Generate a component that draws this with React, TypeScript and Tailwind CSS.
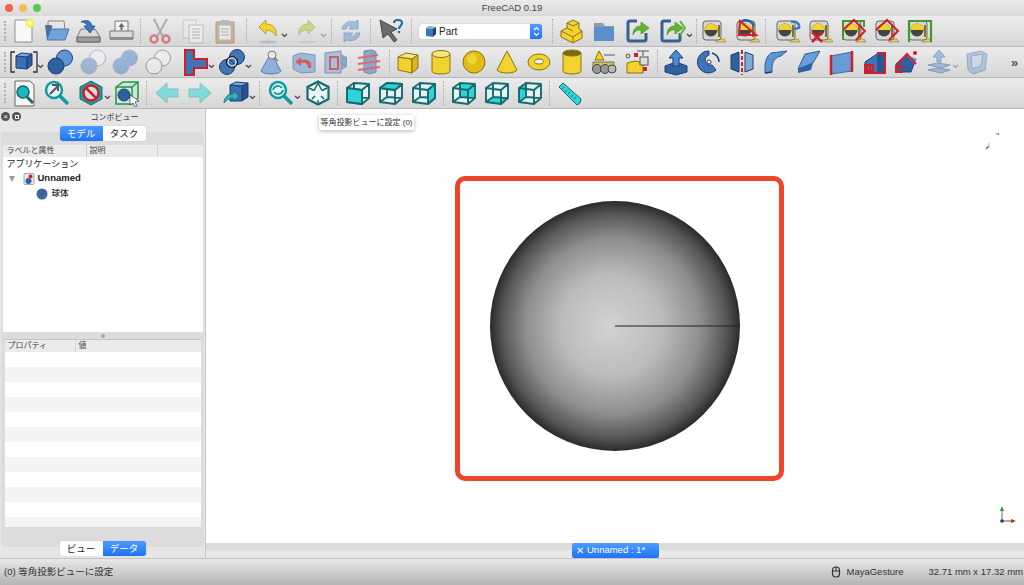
import type { ReactNode } from "react";

const BLUE = "#3f74b5";
const NAVY = "#1d3f72";
const GOLD = "#f2d22e";
const GOLD_D = "#8a7210";
const TEAL = "#2fd4d8";
const TEAL_D = "#166a70";
const RED = "#cf1f2b";

function Sv({ children, faded }: { children: ReactNode; faded?: boolean }) {
  return (
    <svg width="28" height="28" viewBox="0 0 28 28" className={faded ? "opacity-50" : ""}>
      {children}
    </svg>
  );
}

function Tool({ children, className = "w-[33px]" }: { children: ReactNode; className?: string }) {
  return <div className={`flex shrink-0 items-center justify-center ${className}`}>{children}</div>;
}

function Chev({ className = "" }: { className?: string }) {
  return (
    <div className={`-ml-[4px] flex w-[8px] shrink-0 justify-center pt-[8px] ${className}`}>
      <svg width="7" height="5" viewBox="0 0 7 5">
        <path d="M1 1l2.5 2.5L6 1" fill="none" stroke="#444" strokeWidth="1.2" />
      </svg>
    </div>
  );
}

function Sep({ className = "" }: { className?: string }) {
  return <div className={`h-[24px] w-px shrink-0 border-l border-dotted border-[#a8a8a8] ${className}`} />;
}

function Handle() {
  return <div className="ml-[4px] h-[20px] w-[3px] shrink-0 border-l-2 border-dotted border-[#b0b0b0]" />;
}

function Row({ children }: { children: ReactNode }) {
  return (
    <div className="flex h-[31px] items-center overflow-hidden border-b border-[#b8b8b8] bg-gradient-to-b from-[#ececec] to-[#d6d6d6]">
      {children}
    </div>
  );
}

/* ---- row 1 icons ---- */
const NewDoc = () => (
  <Sv>
    <path d="M6 3h17v22H6z" fill="#f8f8f4" stroke="#8f8f8f" />
    <circle cx="21" cy="6" r="4.5" fill="#f6ee5a" />
    <circle cx="21" cy="6" r="2" fill="#fff9b0" />
  </Sv>
);
const OpenFolder = () => (
  <Sv>
    <path d="M6 4h16l1 9H6z" fill="#e6e6e6" stroke="#888" />
    <path d="M3 8h6l2 2h-1L7 22h14l1 1H5z" fill="#4c6f9e" />
    <path d="M9 12h18l-4 11H5z" fill="#6fa3dc" stroke="#4c78ae" />
  </Sv>
);
const SaveDisk = () => (
  <Sv>
    <path d="M7 12h14l5 8v5H3v-5z" fill="#d9d9d9" stroke="#777" />
    <path d="M3 20h23v5H3z" fill="#9c9c9c" stroke="#666" />
    <path d="M7 5c6-3 10-1 11 4h3l-5 7-6-7h3c0-2-3-4-6-4z" fill="#3b78c4" stroke="#1d4d8a" strokeWidth=".8" />
  </Sv>
);
const ExportTray = () => (
  <Sv>
    <path d="M8 4h13v11H8z" fill="#f2f2f2" stroke="#777" />
    <path d="M14.500 6l3 4h-2v3h-2v-3h-2z" fill="#666" />
    <path d="M3 14h23v8H3z" fill="#dcdcdc" stroke="#777" />
    <path d="M3 20h23v3H3z" fill="#8e8e8e" />
  </Sv>
);
const Scissors = () => (
  <Sv faded>
    <path d="M8 2l9 18M21 2l-10 18" stroke="#777" strokeWidth="2" fill="none" />
    <circle cx="8" cy="22" r="3.500" fill="none" stroke={RED} strokeWidth="2.500" />
    <circle cx="20" cy="22" r="3.500" fill="none" stroke={RED} strokeWidth="2.500" />
  </Sv>
);
const CopyPages = () => (
  <Sv faded>
    <path d="M4 3h13v18H4z" fill="#eee" stroke="#aaa" />
    <path d="M10 8h14v18H10z" fill="#f7f7f7" stroke="#999" />
    <path d="M13 12h8M13 15h8M13 18h8M13 21h8" stroke="#888" />
  </Sv>
);
const Paste = () => (
  <Sv faded>
    <path d="M5 5h18v21H5z" fill="#b9873f" stroke="#7a5520" />
    <path d="M8 8h12v15H8z" fill="#f3f3f3" stroke="#888" />
    <path d="M10 3h8v5h-8z" fill="#888" />
    <path d="M10 12h8M10 15h8M10 18h8" stroke="#777" />
  </Sv>
);
const Arrow = ({ mirror, fill, stroke, faded }: { mirror?: boolean; fill: string; stroke: string; faded?: boolean }) => (
  <Sv faded={faded}>
    <ellipse cx="14" cy="25" rx="9" ry="1.500" fill="#bbb" />
    <path
      d={mirror ? "M22 10l-7-7v4C9 7 5 11 6 18c2-4 5-5 9-5v4z" : "M5 10l7-7v4c6 0 11 4 10 12-2-4-6-6-10-6v4z"}
      fill={fill}
      stroke={stroke}
      strokeWidth=".8"
    />
  </Sv>
);
const Refresh = () => (
  <Sv faded>
    <path d="M5 12C6 6 12 3 18 5l3-2v9h-9l3-3c-3-1-5 0-6 3zM23 16c-1 6-7 9-13 7l-3 2v-9h9l-3 3c3 1 5 0 6-3z" fill="#5c97d6" stroke="#2c5f9e" strokeWidth=".8" />
  </Sv>
);
const WhatsThis = () => (
  <Sv>
    <path d="M3 3l17 9-6 3 6 8-3 2-6-8-5 4z" fill="#6c6c6c" stroke="#333" strokeWidth=".8" />
    <path d="M17 6c0-4 8-4 8 0 0 3-3 3-3 6" fill="none" stroke="#2a6bb0" strokeWidth="2.200" />
    <circle cx="22" cy="15" r="1.300" fill="#2a6bb0" />
  </Sv>
);
const Steps = () => (
  <Sv>
    <path d="M5 14l6-3V6l6-3 6 3v6l3 2v7l-9 5-12-6z" fill={GOLD} stroke={GOLD_D} />
    <path d="M5 14l12 6 9-6M17 20v6M11 6l6 3 6-3M11 11l6 3" fill="none" stroke={GOLD_D} />
  </Sv>
);
const PlainFolder = () => (
  <Sv>
    <path d="M4 6h9l2 3h9v15H4z" fill="#8f9aa8" />
    <path d="M4 10h20v14H4z" fill="#5c8fc9" />
  </Sv>
);
const LinkArrow = ({ extra }: { extra?: boolean }) => (
  <Sv>
    <path d="M13 4H6a2 2 0 00-2 2v16a2 2 0 002 2h14a2 2 0 002-2v-6" fill="none" stroke="#33628f" strokeWidth="3" />
    <path d="M9 18c0-6 3-9 8-9V5l8 6-8 6v-4c-4 0-6 1-8 5z" fill="#5fb52e" stroke="#3d8a18" strokeWidth=".6" />
    {extra && <path d="M22 4l5 7-5 7" fill="none" stroke="#5fb52e" strokeWidth="2" />}
  </Sv>
);
const Tape = ({ children }: { children?: ReactNode }) => (
  <Sv>
    <path d="M15 22h9l2 3h-10z" fill={GOLD} stroke="#777" strokeWidth=".6" />
    <rect x="3" y="4" width="18" height="19" rx="3" fill="#d8d8d8" stroke="#666" />
    <circle cx="11" cy="13" r="6.500" fill="#444" />
    <path d="M4.500 13a6.500 6.500 0 0113 0z" fill={GOLD} />
    <path d="M19 8v12" stroke={GOLD_D} strokeWidth="2" />
    {children}
  </Sv>
);

/* ---- row 2 icons ---- */
const Cube = ({ front, top, side, edge, faded }: { front: string; top: string; side: string; edge: string; faded?: boolean }) => (
  <Sv faded={faded}>
    <path d="M4 9l14 2v14L4 22z" fill={front} stroke={edge} />
    <path d="M4 9l8-4 12 2-6 4z" fill={top} stroke={edge} />
    <path d="M18 11l6-4v13l-6 5z" fill={side} stroke={edge} />
  </Sv>
);
const BracketCube = () => (
  <svg width="28" height="28" viewBox="0 0 28 28">
    <path d="M5 4H1v20h4M23 4h4v20h-4" fill="none" stroke="#333" strokeWidth="1.300" />
    <path d="M6 8l11 1v12L6 20z" fill="#3a6fb3" stroke={NAVY} />
    <path d="M6 8l5-3 11 1-5 3z" fill="#7aa7dc" stroke={NAVY} />
    <path d="M17 9l5-3v11l-5 4z" fill="#2d5a96" stroke={NAVY} />
  </svg>
);
const Bool = ({ a, b, stroke, faded }: { a: string; b: string; stroke: string; faded?: boolean }) => (
  <Sv faded={faded}>
    <circle cx="18.500" cy="10" r="8" fill={b} stroke={stroke} />
    <circle cx="10" cy="18" r="8" fill={a} stroke={stroke} />
  </Sv>
);
const SectionT = () => (
  <Sv>
    <path d="M4 2h9v9h13v9H13v7H4z" fill={BLUE} stroke={RED} strokeWidth="2" />
    <path d="M13 11h13" stroke={RED} strokeWidth="2" />
  </Sv>
);
const Join = () => (
  <Sv>
    <circle cx="19" cy="9" r="7.500" fill={BLUE} stroke={NAVY} />
    <circle cx="9" cy="19" r="7.500" fill={BLUE} stroke={NAVY} />
    <circle cx="14" cy="14" r="5.500" fill="none" stroke="#111" strokeWidth="1.200" />
    <circle cx="14" cy="14" r="4" fill="none" stroke="#eee" strokeWidth="1.200" />
  </Sv>
);
const ConeCheck = () => (
  <Sv>
    <path d="M14 5L4 23c3 4 17 4 20 0z" fill="#8fb0d8" stroke="#5c7ea8" />
    <circle cx="15" cy="7" r="4" fill="#e8e8e8" stroke="#777" />
    <path d="M18 10l3 3" stroke="#777" strokeWidth="1.500" />
  </Sv>
);
const BlockRed = () => (
  <Sv>
    <path d="M3 8l8-3 14 2v17l-14 1-8-4z" fill="#9db9da" stroke="#7d95b4" />
    <path d="M21 20c2-7-4-10-10-8V9l-6 5 6 4v-3c4-1 7 1 7 5z" fill="#d0605c" />
  </Sv>
);
const CrossSec = () => (
  <Sv>
    <path d="M3 5l16-2v22L3 25z" fill="#a9bedb" stroke="#7d95b4" />
    <path d="M19 6l6 3v10l-6 3z" fill="#8aa4c8" />
    <path d="M8 9h8v12H8z" fill="none" stroke="#d0605c" strokeWidth="2" />
  </Sv>
);
const Slices = () => (
  <Sv>
    <path d="M9 3l8-1 4 2v20l-6 2-6-2z" fill="#8aa8cf" stroke="#6d8bb2" />
    <path d="M3 10l20-3M3 16l22-3M3 22l22-3" stroke="#dc6a66" strokeWidth="1.800" />
  </Sv>
);
const YBox = () => <Cube front={GOLD} top="#f8e67a" side="#d9b81f" edge={GOLD_D} />;
const YCyl = () => (
  <Sv>
    <path d="M5 6v17c0 4 18 4 18 0V6z" fill={GOLD} stroke={GOLD_D} />
    <ellipse cx="14" cy="6" rx="9" ry="3.500" fill="#f8e67a" stroke={GOLD_D} />
  </Sv>
);
const YSphere = () => (
  <Sv>
    <circle cx="14" cy="14" r="11" fill="#e3bd12" stroke={GOLD_D} />
    <circle cx="12" cy="11" r="5" fill="#f0d43a" />
  </Sv>
);
const YCone = () => (
  <Sv>
    <path d="M14 3L4 22c3 4 17 4 20 0z" fill={GOLD} stroke={GOLD_D} />
  </Sv>
);
const YTorus = () => (
  <Sv>
    <ellipse cx="14" cy="14" rx="11" ry="8" fill={GOLD} stroke={GOLD_D} />
    <ellipse cx="14" cy="13.500" rx="4.500" ry="2.500" fill="#eee" stroke={GOLD_D} />
  </Sv>
);
const YTube = () => (
  <Sv>
    <path d="M5 5v18c0 4 18 4 18 0V5z" fill={GOLD} stroke={GOLD_D} />
    <ellipse cx="14" cy="5" rx="9" ry="3" fill="#7a6a10" stroke={GOLD_D} />
  </Sv>
);
const PrimGroup = () => (
  <Sv>
    <path d="M9 3L5 12h9z" fill={GOLD} stroke={GOLD_D} />
    <path d="M14 7h11" stroke="#888" strokeWidth="1.500" />
    <path d="M3 14h21v6H3z" fill="#d6c24a" stroke="#777" />
    <circle cx="7" cy="21" r="4.500" fill="#999" stroke="#444" />
    <circle cx="15" cy="21" r="4.500" fill="#999" stroke="#444" />
    <circle cx="22" cy="21" r="4" fill="#bbb" stroke="#444" />
  </Sv>
);
const BuilderBox = () => (
  <Sv>
    <path d="M4 15l8-2 8 2v10H4z" fill={GOLD} stroke={GOLD_D} />
    <path d="M14 3h12M20 3v5" stroke="#555" />
    <rect x="17" y="9" width="8" height="8" fill="#ddd" stroke="#555" />
    <rect x="11" y="5" width="4" height="4" fill={RED} />
    <rect x="20" y="19" width="4" height="4" fill={RED} />
    <circle cx="5" cy="8" r="2" fill="#ddd" stroke="#555" />
  </Sv>
);
const Extrude = () => (
  <Sv>
    <path d="M3 18l11-4 11 4v6l-11 3-11-3z" fill="#2e629f" stroke={NAVY} />
    <path d="M14 2l7 8h-4v8h-6v-8H7z" fill="#4d8ad0" stroke={NAVY} />
  </Sv>
);
const Revolve = () => (
  <Sv>
    <path d="M14 3a11 11 0 107 19l-4-5a5 5 0 11-3-10z" fill={BLUE} stroke={NAVY} />
    <circle cx="14" cy="14" r="2" fill="#fff" stroke={NAVY} />
    <path d="M17 5a10 10 0 017 9" fill="none" stroke={NAVY} strokeWidth="1.500" />
  </Sv>
);
const Mirror = () => (
  <Sv>
    <path d="M3 7l8-3v20l-8-3z" fill="#2e629f" stroke={NAVY} />
    <path d="M25 7l-8-3v20l8-3z" fill="#83a9d6" stroke={NAVY} />
    <path d="M14 2v25" stroke={RED} strokeWidth="2" strokeDasharray="4 2" />
  </Sv>
);
const Fillet = () => (
  <Sv>
    <path d="M10 5l16-2-6 5c-6 1-9 6-9 12v4l-7 1v-6c0-6 2-11 6-14z" fill="#5f95d2" stroke="#2e5f9e" />
    <path d="M4 25l7-1" stroke={NAVY} strokeWidth="1.500" />
  </Sv>
);
const Chamfer = () => (
  <Sv>
    <path d="M11 6l15-3-7 12-15 6z" fill="#6aa0da" stroke="#2e5f9e" />
    <path d="M4 21v4l13-3 2-7-15 6z" fill="#2e629f" />
  </Sv>
);
const Ruled = () => (
  <Sv>
    <path d="M4 8l21-4v19L4 26z" fill="#6a9bd6" stroke="#3a6aa8" />
    <path d="M4 7v20M25 3v21" stroke={RED} strokeWidth="2.500" />
  </Sv>
);
const Loft = () => (
  <Sv>
    <path d="M5 14l12-8h7v19H5z" fill="#3f74b5" stroke={NAVY} />
    <path d="M17 6l7 0v19h-7z" fill="#2a5792" />
    <path d="M17 5h8v20H5v-8h5v5" fill="none" stroke={RED} strokeWidth="2" />
    <rect x="7" y="17" width="6" height="6" fill="none" stroke={RED} strokeWidth="2" />
  </Sv>
);
const Sweep = () => (
  <Sv>
    <path d="M4 16l10-9 8 9-3 8H4z" fill="#2e629f" stroke={NAVY} />
    <path d="M14 7l8 9 3-5z" fill="#5f95d2" />
    <path d="M4 18l11-12 9 10" fill="none" stroke={RED} strokeWidth="2" />
    <rect x="4" y="19" width="6" height="5" fill="none" stroke={RED} strokeWidth="2" />
    <circle cx="23" cy="5" r="2" fill={RED} />
  </Sv>
);
const Offset = () => (
  <Sv faded>
    <path d="M14 2l6 7h-4v5h-4V9H8z" fill="#5f95d2" stroke="#2e5f9e" />
    <path d="M3 17l10-2 12 2-9 3z" fill="#5f95d2" stroke="#2e5f9e" />
    <path d="M3 22l10-2 12 2-9 3z" fill="#5f95d2" stroke="#2e5f9e" />
  </Sv>
);
const Thick = () => (
  <Sv faded>
    <path d="M5 6l14-3 6 3-2 16-12 4-5-4z" fill="#7ea6d6" stroke="#4a74a8" />
    <path d="M9 8l12-2-2 12-9 3z" fill="#b7cde8" stroke="#4a74a8" />
  </Sv>
);

/* ---- row 3 icons ---- */
const FitPage = () => (
  <Sv>
    <path d="M5 2h15l4 4v21H5z" fill="#f5f5f5" stroke="#666" />
    <circle cx="13" cy="13" r="6" fill="#23b5bb" stroke={TEAL_D} strokeWidth="1.500" />
    <path d="M17 18l6 6" stroke={TEAL_D} strokeWidth="3" />
  </Sv>
);
const Magnify = ({ inner }: { inner?: ReactNode }) => (
  <Sv>
    <circle cx="11" cy="11" r="8" fill="#dff6f7" stroke="#129aa0" strokeWidth="2.500" />
    <path d="M17 17l8 8" stroke="#129aa0" strokeWidth="3.500" />
    {inner}
  </Sv>
);
const DrawStyle = () => (
  <Sv>
    <path d="M14 2l11 6v12l-11 6-11-6V8z" fill="#1f9da3" stroke={TEAL_D} />
    <circle cx="14" cy="14" r="7.500" fill="#ddd" stroke={RED} strokeWidth="2.500" />
    <path d="M9 9l10 10" stroke={RED} strokeWidth="2.500" />
  </Sv>
);
const BoxSel = () => (
  <Sv>
    <path d="M3 8l7-5h15v16l-6 6H3z" fill="#cfe3df" stroke="#1d9a3a" strokeWidth="1.500" />
    <path d="M3 8h16v17M19 8l6-5" fill="none" stroke="#1d9a3a" strokeWidth="1.500" />
    <circle cx="11" cy="16" r="6" fill="#2e5f9e" stroke={NAVY} />
    <path d="M17 16l9 6-4 1 2 4-2 1-2-4-3 2z" fill="#fff" stroke="#333" strokeWidth=".7" />
  </Sv>
);
const NavArrow = ({ right }: { right?: boolean }) => (
  <Sv faded>
    <path d={right ? "M3 10h11V4l11 10-11 10v-6H3z" : "M25 10H14V4L3 14l11 10v-6h11z"} fill={TEAL} stroke="#20a4a8" />
  </Sv>
);
const ViewCreate = () => (
  <Sv>
    <path d="M8 6l12 1v15H8z" fill="#3a6fb3" stroke={NAVY} />
    <path d="M8 6l6-3 12 1-6 3z" fill="#7aa7dc" stroke={NAVY} />
    <path d="M20 7l6-3v14l-6 4z" fill="#24508c" stroke={NAVY} />
    <path d="M2 24c0-6 4-9 9-9v-3l6 5-6 5v-3c-4 0-6 2-9 5z" fill="#2fb6bd" stroke={TEAL_D} strokeWidth=".7" />
  </Sv>
);
const Hex = () => (
  <Sv>
    <path d="M14 2.500l10.500 5.500v12L14 25.500 3.500 20V8z" fill="#e9f4f4" stroke={TEAL_D} strokeWidth="2.200" />
    <path d="M5 9l5 2.500M23 9l-5 2.500M14 4l-4 7.500M14 4l4 7.500M8 20l3-3M20 20l-3-3M14 24v-3" fill="none" stroke={TEAL_D} strokeWidth="1.500" />
  </Sv>
);

type Face = "front" | "top" | "right" | "rear" | "left" | "bottom";

const FACE_PATHS: Record<Face, string> = {
  front: "M3 9l15 2v14L3 23z",
  top: "M3 9l7-5 15 1-7 6z",
  right: "M18 11l7-6v14l-7 6z",
  rear: "M10 4l15 1v14l-15-1z",
  left: "M3 9l7-5v14l-7 5z",
  bottom: "M10 18l15 1-7 6-15-2z",
};

function WireCube({ face }: { face: Face }) {
  // near faces cover the back edges, far faces sit behind them
  const near = face === "front" || face === "top" || face === "right";
  const edges = "M3 9l7-5 15 1v14l-7 6-15-2zM3 9l15 2 7-6M18 11v14M10 4v14l15 1M10 18l-7 5";
  return (
    <Sv>
      <path d="M3 9l7-5 15 1v14l-7 6-15-2z" fill="#e4f2f2" />
      {!near && <path d={FACE_PATHS[face]} fill={TEAL} />}
      <path d={edges} fill="none" stroke={TEAL_D} strokeWidth="1.900" strokeLinejoin="round" />
      {near && (
        <path d={FACE_PATHS[face]} fill={TEAL} stroke={TEAL_D} strokeWidth="1.900" strokeLinejoin="round" />
      )}
    </Sv>
  );
}
const Ruler = () => (
  <Sv>
    <path d="M3 8l4-4 18 16-1 4-3 2z" fill={TEAL} stroke={TEAL_D} />
    <path d="M8 8l-2 2M11 11l-2 2M14 13l-2 2M17 16l-2 2M20 18l-2 2" stroke={TEAL_D} />
  </Sv>
);

function AxisCross() {
  return (
    <svg width="24" height="28" viewBox="0 0 24 28">
      <path d="M6 23V10" stroke="#2a9a35" strokeWidth="1" />
      <path d="M6 8l2 5H4z" fill="#2a9a35" />
      <path d="M6 23h12" stroke="#b5322c" strokeWidth="1" />
      <path d="M20 23l-5 2v-4z" fill="#b5322c" />
      <circle cx="6" cy="23" r="1.800" fill="#1d2a9a" />
    </svg>
  );
}

function SegTabs({ left, right, active }: { left: string; right: string; active: "left" | "right" }) {
  const on = "bg-gradient-to-b from-[#4d9bff] to-[#1f72f5] text-white";
  const off = "bg-white text-[#222]";
  return (
    <div className="relative z-10 flex h-[15px] w-[86px] overflow-hidden rounded-[3px] text-[9.500px] leading-[15px] shadow-[0_0_1px_rgba(0,0,0,0.3)]">
      <div className={`flex-1 text-center ${active === "left" ? on : off}`}>{left}</div>
      <div className={`flex-1 text-center ${active === "right" ? on : off}`}>{right}</div>
    </div>
  );
}

const PROP_ROWS = Array.from({ length: 12 }, (_, i) => i);

export default function App() {
  return (
    <div className="flex h-[585px] w-[1024px] flex-col overflow-hidden bg-[#e6e6e6] font-['Liberation_Sans','Noto_Sans_CJK_JP',sans-serif] text-[#222]">
      {/* title bar */}
      <div className="relative flex h-[16px] items-center justify-center bg-gradient-to-b from-[#ebebeb] to-[#d9d9d9] text-[9.500px] text-[#444]">
        <div className="absolute left-[5px] top-[4px] flex gap-[6px]">
          <span className="h-[8px] w-[8px] rounded-full bg-[#f0605a]" />
          <span className="h-[8px] w-[8px] rounded-full bg-[#f5bd4f]" />
          <span className="h-[8px] w-[8px] rounded-full bg-[#5fc554]" />
        </div>
        FreeCAD 0.19
      </div>

      {/* toolbar rows */}
      <Row>
        <Handle />
        <Tool className="w-[32.5px]"><NewDoc /></Tool>
        <Tool className="w-[32.5px]"><OpenFolder /></Tool>
        <Tool className="w-[32.5px]"><SaveDisk /></Tool>
        <Tool className="w-[32.5px]"><ExportTray /></Tool>
        <Sep className="ml-[3px] mr-[3px]" />
        <Tool className="w-[32.5px]"><Scissors /></Tool>
        <Tool className="w-[32.5px]"><CopyPages /></Tool>
        <Tool className="w-[32.5px]"><Paste /></Tool>
        <Sep className="ml-[4px] mr-[4.5px]" />
        <Tool><Arrow fill="#f3d52f" stroke="#a98d12" /></Tool>
        <Chev />
        <Tool className="ml-[2px] w-[33px]"><Arrow mirror faded fill="#a8c93a" stroke="#7a9a20" /></Tool>
        <Chev className="opacity-40" />
        <Sep className="ml-[3.5px] mr-[2.5px]" />
        <Tool><Refresh /></Tool>
        <Sep className="ml-[3px] mr-[3px]" />
        <Tool><WhatsThis /></Tool>
        <Sep className="ml-[4px] mr-[7px]" />
        <div className="flex h-[15px] w-[123px] shrink-0 items-center overflow-hidden rounded-[3px] bg-white text-[10px] shadow-[0_0_1px_rgba(0,0,0,0.4)]">
          <svg width="14" height="14" viewBox="0 0 14 14" className="ml-[5px]">
            <path d="M2 4l7 1v8l-7-1z" fill={BLUE} />
            <path d="M2 4l3-2 7 1-3 2z" fill="#7aa7dc" />
            <path d="M9 5l3-2v7l-3 3z" fill={NAVY} />
          </svg>
          <span className="ml-[1px] flex-1">Part</span>
          <div className="flex h-full w-[12px] flex-col items-center justify-center gap-[2px] bg-gradient-to-b from-[#4d9bff] to-[#1f72f5]">
            <svg width="7" height="11" viewBox="0 0 7 11">
              <path d="M1 4l2.500-2.500L6 4M1 7l2.500 2.500L6 7" fill="none" stroke="#fff" strokeWidth="1.200" />
            </svg>
          </div>
        </div>
        <Sep className="ml-[10px] mr-[0px]" />
        <Tool className="w-[34px]"><Steps /></Tool>
        <Tool className="w-[34px]"><PlainFolder /></Tool>
        <Tool className="w-[34px]"><LinkArrow /></Tool>
        <Tool className="w-[34px]"><LinkArrow extra /></Tool>
        <Chev />
        <Sep className="ml-[3px] mr-[0px]" />
        <Tool className="w-[34px]"><Tape /></Tool>
        <Tool>
          <Tape>
            <path d="M6 4l16 14H5z" fill="none" stroke={RED} strokeWidth="2" />
            <path d="M8 4c5-2 10 0 12 5" fill="none" stroke="#2e5f9e" strokeWidth="2.500" />
          </Tape>
        </Tool>
        <Sep className="ml-[1px] mr-[5px]" />
        <Tool>
          <Tape>
            <path d="M17 5c5-2 9 2 8 6l-5 1" fill="none" stroke="#3a78c0" strokeWidth="2.500" />
          </Tape>
        </Tool>
        <Tool>
          <Tape>
            <path d="M5 15l10 10M15 15L5 25" stroke={RED} strokeWidth="2.500" />
          </Tape>
        </Tool>
        <Tool>
          <Tape>
            <path d="M2 4h22v6M3 4v19" fill="none" stroke="#3f9a2e" strokeWidth="2" />
            <path d="M3 13l11-10 11 11-9 9" fill="none" stroke={RED} strokeWidth="2" />
          </Tape>
        </Tool>
        <Tool>
          <Tape>
            <path d="M3 13l11-10 11 11-9 9" fill="none" stroke={RED} strokeWidth="2" />
          </Tape>
        </Tool>
        <Tool>
          <Tape>
            <path d="M3 25V4h22v21" fill="none" stroke="#3f9a2e" strokeWidth="2.200" />
          </Tape>
        </Tool>
      </Row>

      <Row>
        <Handle />
        <Tool className="w-[33px]"><BracketCube /></Tool>
        <Chev />
        <Tool className="w-[32.500px]"><Bool a="#2e629f" b="#5f95d2" stroke={NAVY} /></Tool>
        <Tool className="w-[32.500px]"><Bool a="#5f8dc4" b="#f4f4f4" stroke="#6d8bb2" faded /></Tool>
        <Tool className="w-[32.500px]"><Bool a="#4d85c8" b="#4d85c8" stroke="#6d8bb2" faded /></Tool>
        <Tool className="w-[32.500px]"><Bool a="#f2f2f2" b="#f2f2f2" stroke="#555" faded /></Tool>
        <Tool className="ml-[4px] w-[33px]"><SectionT /></Tool>
        <Chev />
        <Tool className="w-[33px]"><Join /></Tool>
        <Chev />
        <Tool className="ml-[3px] w-[32.500px]"><ConeCheck /></Tool>
        <Tool className="w-[32.500px]"><BlockRed /></Tool>
        <Tool className="w-[32.500px]"><CrossSec /></Tool>
        <Tool className="w-[32.500px]"><Slices /></Tool>
        <Sep className="ml-[4px] mr-[1px]" />
        <Tool><YBox /></Tool>
        <Tool><YCyl /></Tool>
        <Tool><YSphere /></Tool>
        <Tool><YCone /></Tool>
        <Tool className="w-[32.500px]"><YTorus /></Tool>
        <Tool className="w-[32.500px]"><YTube /></Tool>
        <Tool className="w-[32.500px]"><PrimGroup /></Tool>
        <Tool className="w-[32.500px]"><BuilderBox /></Tool>
        <Sep className="ml-[4px] mr-[1px]" />
        <Tool><Extrude /></Tool>
        <Tool><Revolve /></Tool>
        <Tool><Mirror /></Tool>
        <Tool><Fillet /></Tool>
        <Tool><Chamfer /></Tool>
        <Tool><Ruled /></Tool>
        <Tool><Loft /></Tool>
        <Tool className="w-[32px]"><Sweep /></Tool>
        <Tool><Offset /></Tool>
        <Chev className="opacity-40" />
        <Tool className="w-[33px]"><Thick /></Tool>
        <span className="ml-[19px] text-[13px] font-bold leading-none text-[#555]">»</span>
      </Row>

      <Row>
        <Handle />
        <Tool><FitPage /></Tool>
        <Tool><Magnify inner={<path d="M7 15l8-8M9 6h6v6" fill="none" stroke="#555" strokeWidth="2" />} /></Tool>
        <Tool className="ml-[1px] w-[33px]"><DrawStyle /></Tool>
        <Chev />
        <Tool className="-ml-[1px] w-[33px]"><BoxSel /></Tool>
        <Sep className="ml-[3px] mr-[3px]" />
        <Tool><NavArrow /></Tool>
        <Tool><NavArrow right /></Tool>
        <Tool className="ml-[3px] w-[33px]"><ViewCreate /></Tool>
        <Chev />
        <Sep className="ml-[3px] mr-[4px]" />
        <Tool><Magnify inner={<path d="M6 11a5 5 0 019-2M16 11a5 5 0 01-9 2" fill="none" stroke="#129aa0" strokeWidth="1.800" />} /></Tool>
        <Chev />
        <Tool><Hex /></Tool>
        <Sep className="ml-[3px] mr-[3px]" />
        <Tool><WireCube face="front" /></Tool>
        <Tool><WireCube face="top" /></Tool>
        <Tool><WireCube face="right" /></Tool>
        <Sep className="ml-[3px] mr-[3px]" />
        <Tool><WireCube face="rear" /></Tool>
        <Tool><WireCube face="bottom" /></Tool>
        <Tool><WireCube face="left" /></Tool>
        <Sep className="ml-[3px] mr-[3px]" />
        <Tool><Ruler /></Tool>
      </Row>

      {/* main */}
      <div className="flex min-h-0 flex-1">
        {/* combo view */}
        <div className="flex w-[206px] shrink-0 flex-col border-r border-[#c4c4c4] bg-[#e6e6e6]">
          <div className="relative h-[17px] pl-[24px] text-center text-[8px] leading-[17px] text-[#333]">
            <div className="absolute left-[1px] top-[3px] flex gap-[2px]">
              <span className="flex h-[9px] w-[9px] items-center justify-center rounded-full bg-[#555] text-[8px] leading-none text-white">×</span>
              <span className="flex h-[9px] w-[9px] items-center justify-center rounded-full bg-[#555]">
                <span className="h-[4px] w-[4px] border border-white" />
              </span>
            </div>
            コンボビュー
          </div>
          <div className="flex justify-center">
            <SegTabs left="モデル" right="タスク" active="left" />
          </div>
          <div className="mx-[1px] -mt-[9px] flex w-[203px] flex-col items-center rounded-[3px] bg-[#dcdcdc] pb-[20px] pt-[13px]">
            <div className="flex h-[187px] w-[200px] flex-col bg-white">
              <div className="flex h-[12px] shrink-0 bg-[#ebebeb] text-[8px] leading-[12px] text-[#444]">
                <div className="w-[84px] border-r border-[#ccc] pl-[4px]">ラベルと属性</div>
                <div className="w-[71px] border-r border-[#ccc] pl-[3px]">説明</div>
              </div>
              <div className="mt-[0px] h-[14px] pl-[4px] text-[9px] leading-[14px]">アプリケーション</div>
              <div className="flex h-[15px] items-center text-[9.500px] font-bold">
                <span className="ml-[6px] mr-[6px] h-0 w-0 border-x-[3.5px] border-t-[6px] border-x-transparent border-t-[#999]" />
                <svg width="12" height="12" viewBox="0 0 12 12" className="ml-[2px] mr-[3px]">
                  <rect x="1" y="0.500" width="10" height="11" rx="1" fill="#e8e8e8" stroke="#aaa" />
                  <circle cx="5.500" cy="8" r="3" fill="#2e629f" />
                  <circle cx="7.500" cy="3.500" r="2" fill={RED} />
                </svg>
                Unnamed
              </div>
              <div className="flex h-[15px] items-center pl-[33px] text-[8.500px] font-medium">
                <svg width="12" height="12" viewBox="0 0 12 12" className="mr-[4px]">
                  <circle cx="6" cy="6" r="5.500" fill="#3568a8" />
                  <path d="M3 9l6-6" stroke="#a82a3a" strokeWidth="1" />
                </svg>
                球体
              </div>
            </div>
            <div className="flex h-[7px] items-center justify-center">
              <span className="h-[4px] w-[4px] rounded-full bg-[#aaa]" />
            </div>
            <div className="flex h-[188px] w-[196px] flex-col overflow-hidden bg-white">
              <div className="flex h-[13px] shrink-0 border-t border-[#c4c4c4] bg-[#ebebeb] text-[8px] leading-[12px] text-[#444]">
                <div className="w-[71px] border-r border-[#d4d4d4] pl-[3px]">プロパティ</div>
                <div className="pl-[3px]">値</div>
              </div>
              {PROP_ROWS.map((i) => (
                <div key={i} className={`h-[15px] shrink-0 ${i % 2 === 1 ? "bg-[#f3f4f4]" : "bg-white"}`} />
              ))}
            </div>
          </div>
          <div className="-mt-[6px] flex justify-center">
            <SegTabs left="ビュー" right="データ" active="right" />
          </div>
        </div>

        {/* 3D view */}
        <div className="flex min-w-0 flex-1 flex-col">
          <div className="relative flex-1 bg-white">
            <svg width="818" height="434" viewBox="206 109 818 434" className="block">
              <defs>
                <radialGradient id="ball" gradientUnits="userSpaceOnUse" cx="615" cy="326" r="125" fx="609" fy="326">
                  <stop offset="0" stopColor="#d2d2d2" />
                  <stop offset="0.4" stopColor="#bcbcbc" />
                  <stop offset="0.7" stopColor="#8e8e8e" />
                  <stop offset="0.9" stopColor="#555" />
                  <stop offset="1" stopColor="#2a2a2a" />
                </radialGradient>
              </defs>
              <circle cx="615" cy="326" r="125" fill="url(#ball)" />
              <path d="M615 326h125" stroke="#222" strokeWidth="1" />
              <path d="M986 149l3-3" stroke="#5a5ae0" strokeWidth="1.500" />
              <circle cx="989" cy="144" r="0.800" fill="#d8a060" />
              <path d="M996.500 134h3" stroke="#555" strokeWidth="1.500" strokeDasharray="1 .5" />
            </svg>
            {/* annotation frame */}
            <div className="absolute left-[249px] top-[67px] h-[305px] w-[329px] rounded-[10px] border-[5px] border-[#ee4628]" />
            {/* tooltip */}
            <div className="absolute left-[113px] top-[6px] h-[15px] w-[95px] rounded-[2px] bg-white text-center text-[8px] leading-[15px] text-[#333] shadow-[0_1px_4px_rgba(0,0,0,0.3)]">
              等角投影ビューに設定 (0)
            </div>
            <div className="absolute right-[4px] bottom-[17px]">
              <AxisCross />
            </div>
          </div>
          <div className="h-[15px] bg-[#e8e8e8]">
            <div className="flex h-[7px] bg-[#dcdcdc]" />
          </div>
          <div className="absolute left-[572px] top-[543px] flex h-[15px] w-[87px] items-center rounded-[2px] bg-gradient-to-b from-[#4d9bff] to-[#1f72f5] pl-[4px] text-[9.500px] text-white">
            <span className="mr-[3px] text-[10px] leading-none">✕</span>
            Unnamed : 1*
          </div>
        </div>
      </div>

      {/* status bar */}
      <div className="flex h-[27px] shrink-0 items-center border-t border-[#c4c4c4] bg-gradient-to-b from-[#e8e8e8] to-[#b4b4b4] pl-[4px] pr-[1px] text-[9.500px] text-[#333]">
        <span>(0) 等角投影ビューに設定</span>
        <span className="flex-1" />
        <svg width="10" height="12" viewBox="0 0 10 12" className="mr-[5px]">
          <rect x="1.500" y="1" width="7" height="10" rx="3" fill="none" stroke="#333" strokeWidth="1.200" />
          <path d="M1.500 5h7M5 1v4" stroke="#333" />
        </svg>
        <span className="w-[82px]">MayaGesture</span>
        <span>32.71 mm x 17.32 mm</span>
      </div>
    </div>
  );
}
